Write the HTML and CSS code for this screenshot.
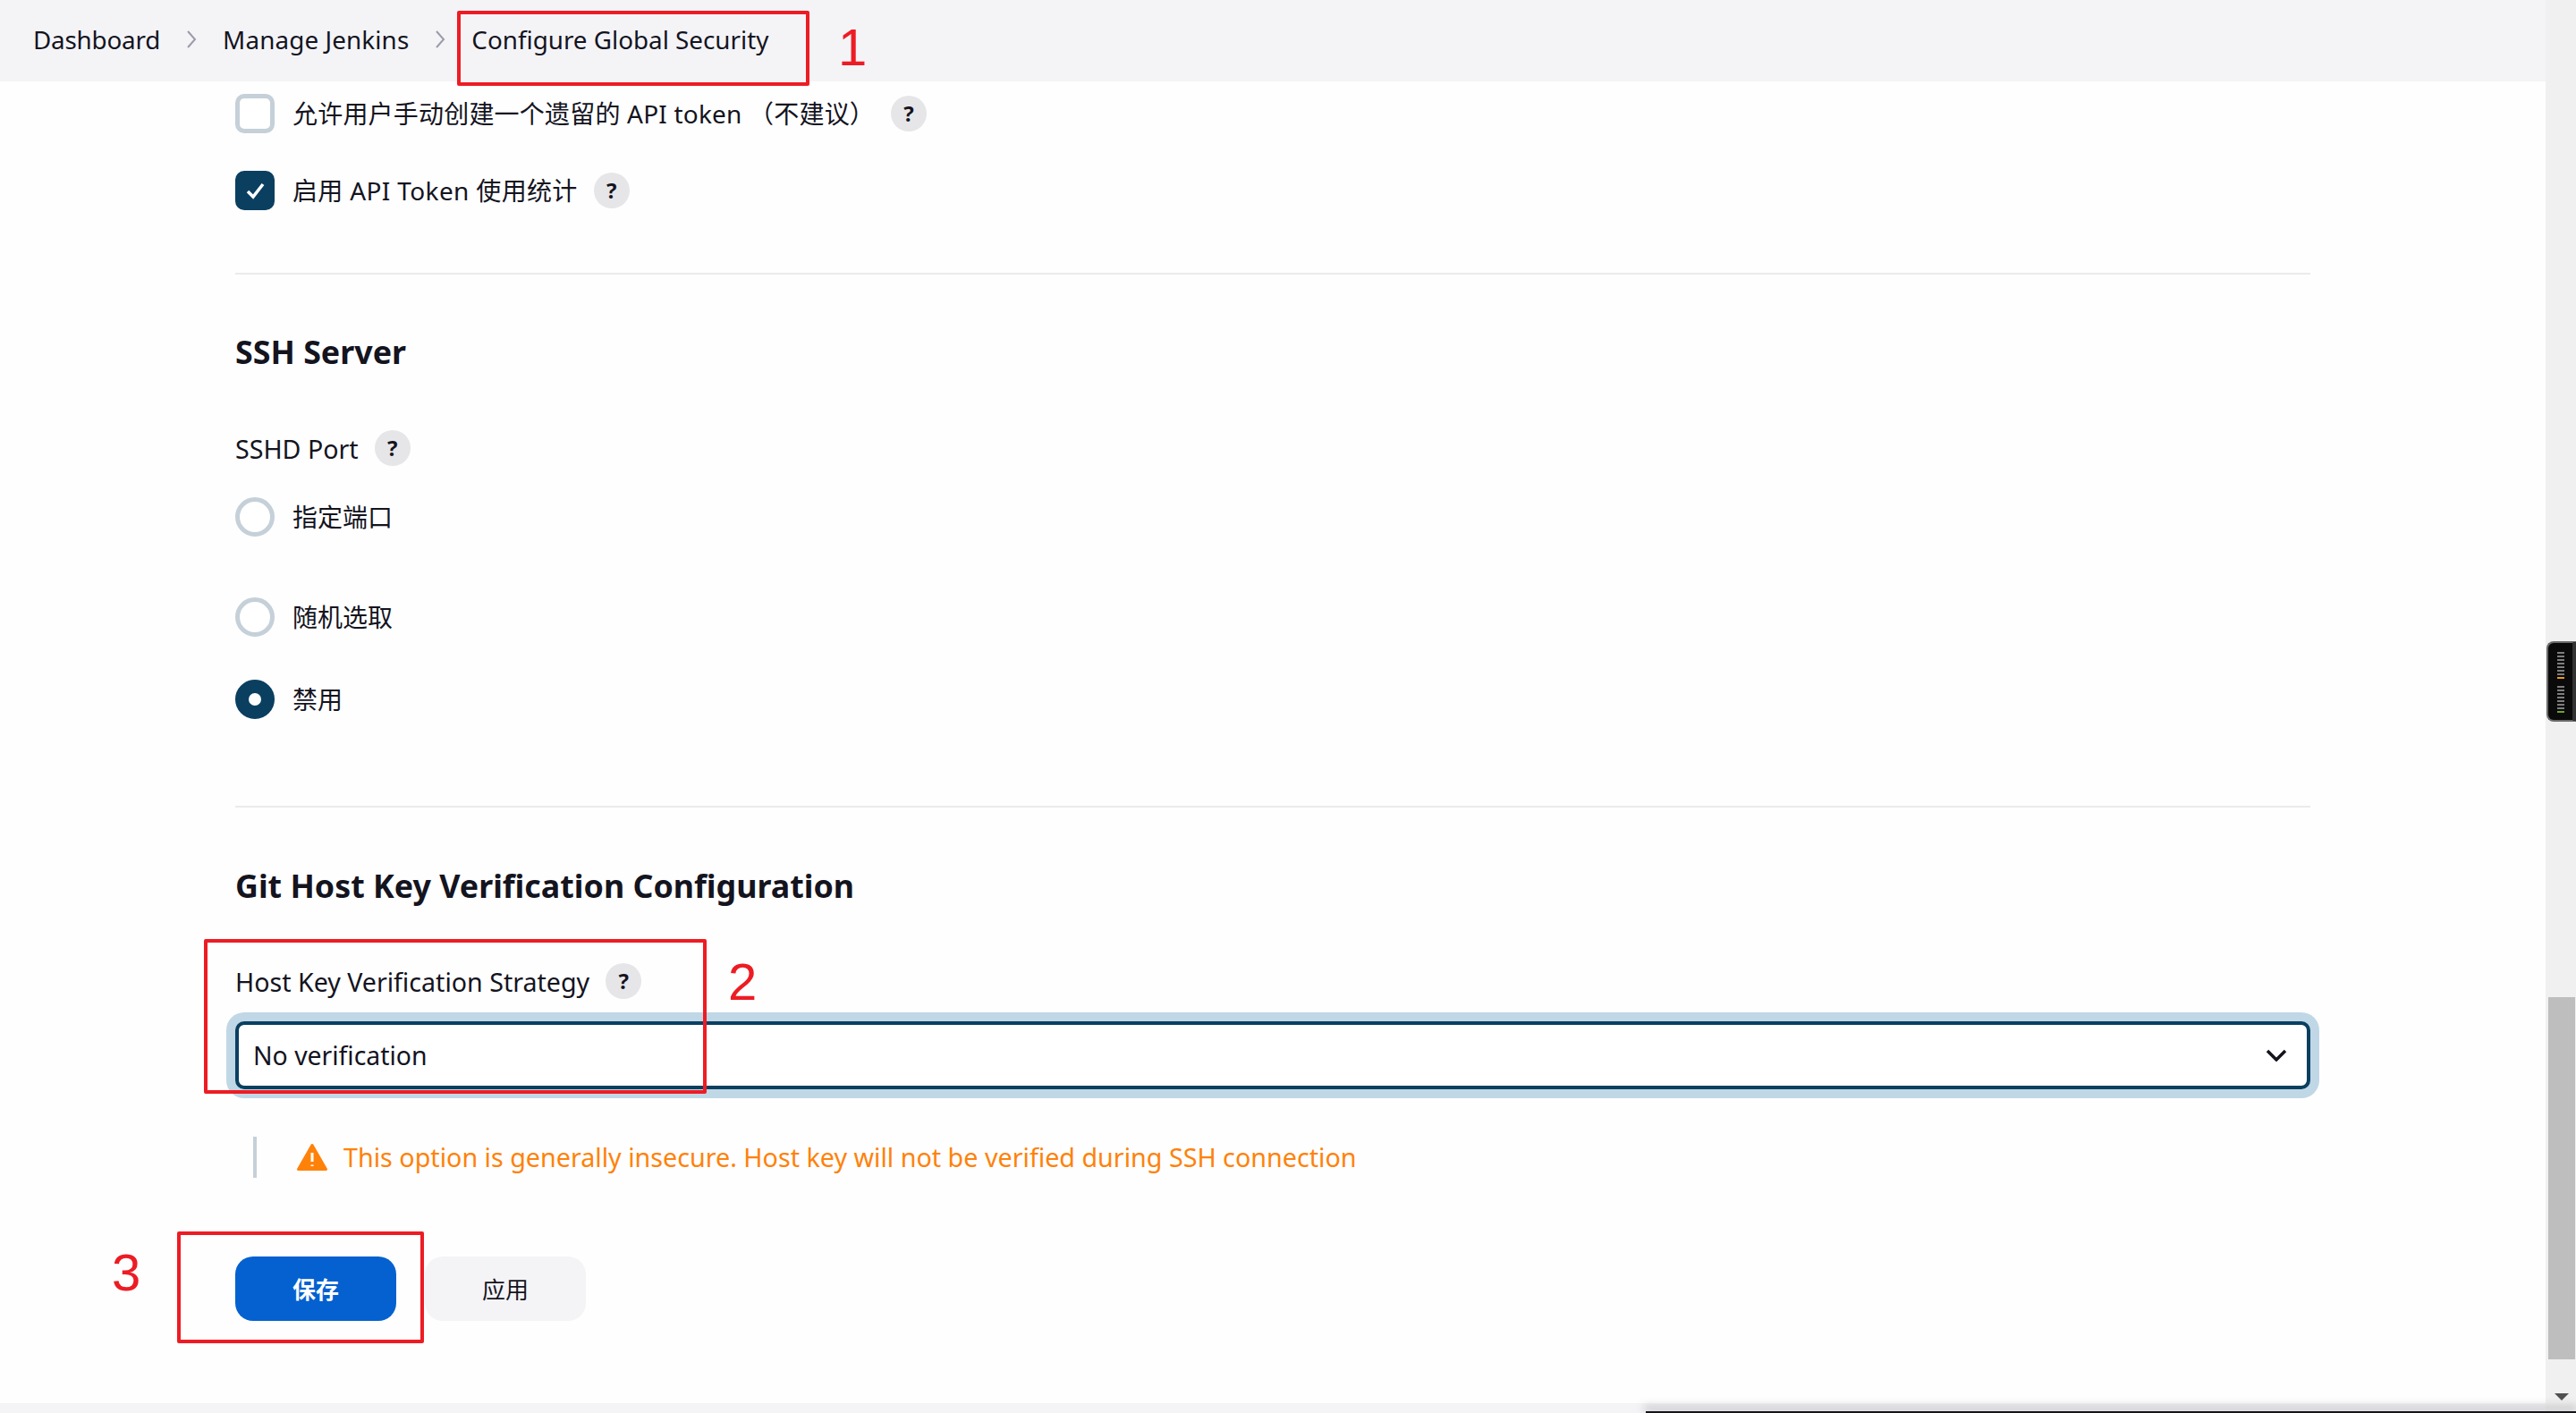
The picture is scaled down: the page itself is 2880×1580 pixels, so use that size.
FILE: index.html
```html
<!DOCTYPE html>
<html lang="zh">
<head>
<meta charset="utf-8">
<title>Configure Global Security</title>
<link rel="stylesheet" href="styles.css">
</head>
<body>
<div class="app">
  <div class="viewport">
    <header class="crumbs">
      <span class="crumb-a">Dashboard</span>
      <svg class="crumb-sep" viewBox="0 0 14 22"><path d="M3 2l8 9-8 9"/></svg>
      <span class="crumb-b">Manage Jenkins</span>
      <svg class="crumb-sep" viewBox="0 0 14 22"><path d="M3 2l8 9-8 9"/></svg>
      <span>Configure Global Security</span>
    </header>
    <main class="content">
      <div class="check-row first">
        <span class="box"></span>
        <span class="check-text">允许用户手动创建一个遗留的 API token （不建议）</span>
        <span class="help">?</span>
      </div>
      <div class="check-row second">
        <span class="box checked"><svg viewBox="0 0 44 44"><path d="M14 23l6 6 11-14"/></svg></span>
        <span class="check-text wide">启用 API Token 使用统计</span>
        <span class="help">?</span>
      </div>
      <hr class="rule rule-a">
      <h2 class="heading">SSH Server</h2>
      <div class="label-row port"><span>SSHD Port</span><span class="help">?</span></div>
      <div class="radio-row r1"><span class="radio"></span><span class="radio-text">指定端口</span></div>
      <div class="radio-row r2"><span class="radio"></span><span class="radio-text">随机选取</span></div>
      <div class="radio-row r3"><span class="radio on"></span><span class="radio-text">禁用</span></div>
      <hr class="rule rule-b">
      <h2 class="heading">Git Host Key Verification Configuration</h2>
      <div class="label-row strategy"><span>Host Key Verification Strategy</span><span class="help">?</span></div>
      <div class="select">
        <span>No verification</span>
        <svg class="chev" viewBox="0 0 24 14"><path d="M2 2l10 10L22 2"/></svg>
      </div>
      <div class="warning">
        <svg class="warn-icon" viewBox="0 0 36 32"><path class="tri" d="M18 2.5L33.5 29.5H2.5z"/><path class="bang" d="M18 11v10M18 24.5v1.6"/></svg>
        <span class="warn-text">This option is generally insecure. Host key will not be verified during SSH connection</span>
      </div>
      <div class="buttons">
        <button class="btn primary">保存</button>
        <button class="btn">应用</button>
      </div>
    </main>
    <footer class="foot"></footer>
  </div>
  <aside class="scrollbar">
    <span class="thumb"></span>
    <span class="arrow"></span>
  </aside>

  <div class="mark m1"></div><span class="num n1">1</span>
  <div class="mark m2"></div><span class="num n2">2</span>
  <div class="mark m3"></div><span class="num n3">3</span>

  <div class="meter">
    <div class="bars orange"></div>
    <div class="bars green"></div>
  </div>
  <div class="dock"></div>
</div>
</body>
</html>
```
FILE: styles.css
```css
* { box-sizing: border-box; }
html, body { margin: 0; padding: 0; height: 100%; }
body {
  font-family: "Noto Sans", "Noto Sans CJK SC", sans-serif;
  font-size: 28px;
  color: #14141f;
  background: #fefefe;
  overflow: hidden;
}
.app { position: relative; display: flex; width: 2880px; height: 1580px; overflow: hidden; }
.viewport { flex: 1; display: flex; flex-direction: column; min-width: 0; }

.crumbs {
  flex: none; height: 91px; background: #f4f4f7;
  display: flex; align-items: center; padding: 0 0 4px 37px; gap: 28px; font-size: 27.8px;
}
.crumb-a { letter-spacing: -.2px; }
.crumb-b { letter-spacing: .12px; }
.crumb-sep { width: 14px; height: 22px; fill: none; stroke: #9b9baa; stroke-width: 2; }

.content { flex: 1; padding: 14px 263px 0; min-height: 0; }
.check-row { display: flex; align-items: center; height: 44px; gap: 18px; }
.check-row.second { margin-top: 42px; }
.check-text { letter-spacing: .2px; padding-bottom: 2px; }
.check-text.wide { letter-spacing: .35px; }
.box { flex: none; width: 44px; height: 44px; margin-right: 2px; border: 5px solid #c5d0d8; border-radius: 10px; background: #fff; }
.box.checked { background: #0a3f60; border-color: #0a3f60; position: relative; }
.box svg { position: absolute; left: -5px; top: -5px; width: 44px; height: 44px; fill: none; stroke: #fff; stroke-width: 3.5; }

.help {
  flex: none; width: 40px; height: 40px; border-radius: 50%; background: #e6e6e8;
  display: flex; align-items: center; justify-content: center;
  font-size: 24px; font-weight: 700; line-height: 1;
}
.rule { border: 0; height: 2px; background: #ebebed; margin: 0; }
.rule-a { margin-top: 70px; }
.rule-b { margin-top: 97px; }
.heading { margin: 0; font-size: 35.8px; font-weight: 700; line-height: 50px; }
.rule-a + .heading { margin-top: 61px; }
.rule-b + .heading { margin-top: 62px; }

.label-row { display: flex; align-items: center; height: 40px; gap: 18px; font-size: 28.6px; }
.label-row.port { margin-top: 63px; }
.label-row.strategy { margin-top: 62px; }

.radio-row { display: flex; align-items: center; height: 44px; gap: 20px; }
.radio-text { padding-bottom: 3px; }
.r1 { margin-top: 35px; }
.r2 { margin-top: 68px; }
.r3 { margin-top: 48px; }
.radio { flex: none; width: 44px; height: 44px; border-radius: 50%; border: 5px solid #c5d0d8; background: #fff; }
.radio.on { border: 15.5px solid #0a3f60; }

.select {
  margin-top: 25px; height: 76px; border: 4px solid #0a3f60; border-radius: 10px;
  box-shadow: 0 0 0 10px #c0d7e6; background: #fff;
  display: flex; align-items: center; justify-content: space-between; padding: 0 22px 0 16px; font-size: 28.4px;
}
.chev { width: 24px; height: 14px; fill: none; stroke: #14141f; stroke-width: 3.5; }

.warning {
  margin: 53px 0 0 20px; height: 46px; border-left: 4px solid #c5d0d8;
  display: flex; align-items: center; gap: 17px; padding-left: 44px; color: #fe820a; font-size: 28.7px;
}
.warn-text { padding-bottom: 2px; }
.warn-icon { width: 36px; height: 32px; }
.tri { fill: #fe820a; stroke: #fe820a; stroke-width: 3; stroke-linejoin: round; }
.bang { fill: none; stroke: #fff; stroke-width: 3; }

.buttons { display: flex; gap: 32px; margin-top: 88px; }
.btn {
  width: 180px; height: 72px; border: 0; border-radius: 20px; background: #f4f4f7;
  font: inherit; font-size: 26px; color: #14141f; padding: 0;
}
.btn.primary { background: #0461cf; color: #fff; font-weight: 700; }

.foot { flex: none; height: 11px; background: #f4f4f7; }

.scrollbar { flex: none; width: 34px; background: #f0f0f0; display: flex; flex-direction: column; align-items: center; padding-top: 1115px; }
.thumb { width: 30px; height: 405px; background: #bebebe; margin-left: 2px; }
.arrow { margin-top: 38px; margin-left: 2px; width: 0; height: 0; border-left: 8px solid transparent; border-right: 8px solid transparent; border-top: 8px solid #505050; }

.mark { position: absolute; border: 4px solid #ed1c24; border-radius: 2px; }
.m1 { left: 511px; top: 12px; width: 394px; height: 84px; }
.m2 { left: 228px; top: 1050px; width: 562px; height: 173px; }
.m3 { left: 198px; top: 1377px; width: 276px; height: 125px; }
.num { position: absolute; color: #ed1c24; font-size: 58px; line-height: 1; font-family: "Liberation Sans", sans-serif; }
.n1 { left: 937px; top: 24px; }
.n2 { left: 814px; top: 1069px; }
.n3 { left: 125px; top: 1394px; }

.meter {
  position: absolute; left: 2847px; top: 717px; width: 33px; height: 90px;
  background: #0a0a0a; border: 2px solid #6a6a6a; border-right: 4px solid #333; border-radius: 8px 0 0 8px;
  display: flex; flex-direction: column; align-items: center; gap: 8px; padding: 10px 0 0 0;
}
.bars {
  width: 8px; height: 30px;
  background: repeating-linear-gradient(to bottom, #7e7e7e 0 2px, #0a0a0a 2px 4px);
  border-bottom: 2px solid transparent;
  background-clip: padding-box;
}
.bars.orange { border-bottom-color: #e89a1c; }
.bars.green { border-bottom-color: #6aa52f; }

.dock {
  position: absolute; left: 1840px; right: 0; bottom: 0; height: 2px; background: #14141a;
  box-shadow: 0 -4px 10px 2px rgba(120,120,125,.4);
}
```
